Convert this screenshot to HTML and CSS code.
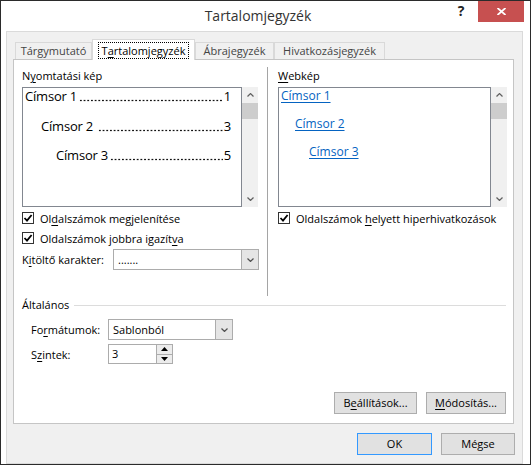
FILE: index.html
```html
<!DOCTYPE html>
<html lang="hu">
<head>
    <meta charset="UTF-8">
    <title>Tartalomjegyzék</title>
    <link rel="stylesheet" href="styles.css">
</head>
<body>
    <div class="dialog">
        <div class="titlebar">
            <div class="title">Tartalomjegyzék</div>
            <div class="help">?</div>
            <div class="close">
                <svg width="9" height="7" viewBox="0 0 9 7"><path d="M0.5 0 L8.5 7 M8.5 0 L0.5 7" stroke="#fff" stroke-width="1.8"/></svg>
            </div>
        </div>

        <div class="client">
            <div class="tabs">
                <div class="tab tab-index">Tárgymutató</div>
                <div class="tab tab-toc active"><span class="focus">T<u>a</u>rtalomjegyzék</span></div>
                <div class="tab tab-fig">Ábrajegyzék</div>
                <div class="tab tab-auth">Hivatkozásjegyzék</div>
            </div>

            <div class="panel">
                <div class="columns">
                    <!-- print preview -->
                    <div class="col col-print">
                        <div class="label">N<u>y</u>omtatási kép</div>
                        <div class="preview">
                            <div class="preview-box">
                                <div class="toc-row"><span>Címsor 1</span><span class="dots"></span><span>1</span></div>
                                <div class="toc-row lvl2"><span>Címsor 2</span><span class="dots gap"></span><span>3</span></div>
                                <div class="toc-row lvl3"><span>Címsor 3</span><span class="dots"></span><span>5</span></div>
                            </div>
                            <div class="scrollbar">
                                <div class="sb-btn"><svg width="7" height="4" viewBox="0 0 7 4"><path d="M0.5 3.5 L3.5 0.6 L6.5 3.5" fill="none" stroke="#606060" stroke-width="1.3"/></svg></div>
                                <div class="sb-thumb"></div>
                                <div class="sb-track"></div>
                                <div class="sb-btn"><svg width="7" height="4" viewBox="0 0 7 4"><path d="M0.5 0.5 L3.5 3.4 L6.5 0.5" fill="none" stroke="#606060" stroke-width="1.3"/></svg></div>
                            </div>
                        </div>
                        <div class="check first">
                            <span class="box"><svg width="10" height="10" viewBox="0 0 10 10"><path d="M1.5 5 L4 7.6 L8.6 2" fill="none" stroke="#000" stroke-width="1.8"/></svg></span>
                            <span>Ol<u>d</u>alszámok megjelenítése</span>
                        </div>
                        <div class="check">
                            <span class="box"><svg width="10" height="10" viewBox="0 0 10 10"><path d="M1.5 5 L4 7.6 L8.6 2" fill="none" stroke="#000" stroke-width="1.8"/></svg></span>
                            <span>Oldalszámok jobbra igazít<u>v</u>a</span>
                        </div>
                        <div class="field-row leader-row">
                            <span class="field-label leader-label">K<u>i</u>töltő karakter:</span>
                            <div class="combo leader-combo">
                                <span class="combo-text">.......</span>
                                <span class="combo-arrow"><svg width="7" height="4" viewBox="0 0 7 4"><path d="M0.5 0.5 L3.5 3.4 L6.5 0.5" fill="none" stroke="#505050" stroke-width="1.3"/></svg></span>
                            </div>
                        </div>
                    </div>

                    <div class="divider"></div>

                    <!-- web preview -->
                    <div class="col col-web">
                        <div class="label"><u>W</u>ebkép</div>
                        <div class="preview">
                            <div class="preview-box web-box">
                                <a class="web-link">Címsor 1</a>
                                <a class="web-link lvl2">Címsor 2</a>
                                <a class="web-link lvl3">Címsor 3</a>
                            </div>
                            <div class="scrollbar">
                                <div class="sb-btn"><svg width="7" height="4" viewBox="0 0 7 4"><path d="M0.5 3.5 L3.5 0.6 L6.5 3.5" fill="none" stroke="#606060" stroke-width="1.3"/></svg></div>
                                <div class="sb-thumb"></div>
                                <div class="sb-track"></div>
                                <div class="sb-btn"><svg width="7" height="4" viewBox="0 0 7 4"><path d="M0.5 0.5 L3.5 3.4 L6.5 0.5" fill="none" stroke="#606060" stroke-width="1.3"/></svg></div>
                            </div>
                        </div>
                        <div class="check first">
                            <span class="box"><svg width="10" height="10" viewBox="0 0 10 10"><path d="M1.5 5 L4 7.6 L8.6 2" fill="none" stroke="#000" stroke-width="1.8"/></svg></span>
                            <span>Oldalszámok <u>h</u>elyett hiperhivatkozások</span>
                        </div>
                    </div>
                </div>

                <div class="general">
                    <div class="group-title">
                        <span>Általános</span>
                        <span class="rule"></span>
                    </div>
                    <div class="field-row format-row">
                        <span class="field-label">Fo<u>r</u>mátumok:</span>
                        <div class="combo format-combo">
                            <span class="combo-text">Sablonból</span>
                            <span class="combo-arrow"><svg width="7" height="4" viewBox="0 0 7 4"><path d="M0.5 0.5 L3.5 3.4 L6.5 0.5" fill="none" stroke="#505050" stroke-width="1.3"/></svg></span>
                        </div>
                    </div>
                    <div class="field-row level-row">
                        <span class="field-label">S<u>z</u>intek:</span>
                        <div class="spinner">
                            <span class="spin-value">3</span>
                            <span class="spin-btns">
                                <span class="spin-btn"><svg width="7" height="4" viewBox="0 0 7 4"><polygon points="0,4 3.5,0 7,4" fill="#000"/></svg></span>
                                <span class="spin-btn"><svg width="7" height="4" viewBox="0 0 7 4"><polygon points="0,0 3.5,4 7,0" fill="#000"/></svg></span>
                            </span>
                        </div>
                    </div>
                </div>

                <div class="panel-buttons">
                    <button class="btn btn-options">B<u>e</u>állítások...</button>
                    <button class="btn btn-modify"><u>M</u>ódosítás...</button>
                </div>
            </div>

            <div class="dialog-buttons">
                <button class="btn btn-ok">OK</button>
                <button class="btn btn-cancel">Mégse</button>
            </div>
        </div>
    </div>
</body>
</html>
```

FILE: styles.css
```css
* {
    margin: 0;
    padding: 0;
    box-sizing: border-box;
}

body {
    font-family: "Open Sans", "Noto Sans", sans-serif;
    font-size: 11px;
    color: #000;
    background: #fff;
}

u {
    text-decoration-thickness: 1px;
    text-underline-offset: 2px;
}

/* window frame */
.dialog {
    width: 531px;
    height: 465px;
    border: 1px solid #2b2b2b;
    background: #fff;
    display: flex;
    flex-direction: column;
}

.titlebar {
    height: 30px;
    flex-shrink: 0;
    display: flex;
    align-items: flex-start;
}

.title {
    flex: 1;
    padding-left: 65px;
    text-align: center;
    font-size: 14px;
    line-height: 30px;
    color: #333;
}

.help {
    width: 22px;
    height: 21px;
    margin-right: 6px;
    font-size: 14px;
    font-weight: 700;
    line-height: 20px;
    text-align: center;
    color: #222;
}

.close {
    width: 46px;
    height: 21px;
    margin-right: 6px;
    background: #c75050;
    display: flex;
    align-items: center;
    justify-content: center;
}

.client {
    flex: 1;
    margin: 0 7px 0 5px;
    border: 1px solid #dadada;
    background: #f0f0f0;
    display: flex;
    flex-direction: column;
}

/* tabs */
.tabs {
    height: 27px;
    flex-shrink: 0;
    display: flex;
    align-items: flex-end;
    padding-left: 8px;
}

.tab {
    height: 17px;
    border: 1px solid #d9d9d9;
    border-bottom: none;
    background: #f0f0f0;
    color: #444;
    text-align: center;
    line-height: 16px;
}

.tab-index { width: 77px; }
.tab-toc { width: 103px; }
.tab-fig { width: 79px; }
.tab-auth { width: 111px; }

.tab.active {
    height: 21px;
    margin-bottom: -1px;
    padding-top: 3px;
    background: #fff;
    color: #000;
    position: relative;
}

.focus {
    display: inline-block;
    padding: 0 3px;
    line-height: 15px;
    outline: 1px dotted #000;
}

.panel {
    height: 365px;
    flex-shrink: 0;
    margin: 0 8px 0 6px;
    border: 1px solid #c5c5c5;
    background: #fff;
    display: flex;
    flex-direction: column;
}

/* preview columns */
.columns {
    height: 236px;
    padding-top: 7px;
    display: flex;
}

.col {
    padding-top: 1px;
}

.col-print {
    width: 237px;
    margin-left: 8px;
}

.col-web {
    width: 229px;
    margin-left: 10px;
}

.divider {
    width: 1px;
    margin-left: 8px;
    background: #a5a5a5;
}

.label {
    line-height: 16px;
    height: 16px;
}

.preview {
    height: 120px;
    margin-top: 3px;
    display: flex;
}

.preview-box {
    width: 220px;
    border: 1px solid #828790;
    padding: 0 10px 0 2px;
    display: flex;
    flex-direction: column;
    gap: 13.5px;
}

.toc-row {
    display: flex;
    font-size: 13px;
    line-height: 16px;
    letter-spacing: -0.2px;
    white-space: nowrap;
}

.toc-row.lvl2 { padding-left: 16px; }
.toc-row.lvl3 { padding-left: 31px; }

/* dot leader between heading and page number */
.dots {
    flex: 1;
    margin: 0 1px 0 2px;
    background-image: radial-gradient(circle, #111 0.75px, transparent 1.15px);
    background-size: 3.7px 3px;
    background-position: 0 11px;
    background-repeat: repeat-x;
}

.dots.gap {
    margin-left: 5px;
}

.web-box {
    width: 213px;
    gap: 12px;
}

.web-link {
    align-self: flex-start;
    font-size: 12px;
    line-height: 16px;
    color: #0563c1;
    text-decoration: underline;
    text-underline-offset: 2px;
}

.web-link.lvl2 { margin-left: 14px; }
.web-link.lvl3 { margin-left: 28px; }

.scrollbar {
    width: 16px;
    background: #f0f0f0;
    display: flex;
    flex-direction: column;
}

.sb-btn {
    height: 16px;
    display: flex;
    align-items: center;
    justify-content: center;
}

.sb-thumb {
    height: 16px;
    background: #cdcdcd;
}

.sb-track {
    flex: 1;
}

/* checkboxes */
.check {
    height: 20px;
    display: flex;
    align-items: center;
}

.check.first {
    margin-top: 1px;
}

.box {
    width: 12px;
    height: 12px;
    margin-right: 6px;
    border: 1px solid #333;
    background: #fff;
    display: flex;
    align-items: center;
    justify-content: center;
}

/* combos and spinner */
.field-row {
    display: flex;
    align-items: center;
}

.leader-row {
    margin-top: 1px;
}

.field-label {
    width: 77px;
}

.leader-label {
    width: 91px;
}

.combo {
    height: 21px;
    border: 1px solid #acacac;
    background: #fff;
    display: flex;
}

.leader-combo { width: 146px; }
.format-combo { width: 125px; }

.combo-text {
    flex: 1;
    padding-left: 4px;
    line-height: 19px;
}

.combo-arrow {
    width: 17px;
    border-left: 1px solid #acacac;
    background: #e5e5e5;
    display: flex;
    align-items: center;
    justify-content: center;
}

.spinner {
    width: 65px;
    height: 20px;
    border: 1px solid #acacac;
    background: #fff;
    display: flex;
}

.spin-value {
    flex: 1;
    padding-left: 3px;
    line-height: 18px;
}

.spin-btns {
    width: 16px;
    display: flex;
    flex-direction: column;
    border-left: 1px solid #acacac;
}

.spin-btn {
    flex: 1;
    background: #ececec;
    display: flex;
    align-items: center;
    justify-content: center;
}

.spin-btn + .spin-btn {
    border-top: 1px solid #acacac;
}

/* general group */
.general {
    padding: 1px 7px 0 8px;
}

.group-title {
    height: 16px;
    line-height: 16px;
    display: flex;
    align-items: center;
}

.rule {
    flex: 1;
    height: 1px;
    margin-left: 5px;
    background: #dcdcdc;
}

.format-row {
    margin-top: 6px;
    padding-left: 9px;
}

.level-row {
    margin-top: 4px;
    padding-left: 9px;
}

/* buttons */
.btn {
    height: 22px;
    border: 1px solid #adadad;
    background: #e1e1e1;
    font-family: inherit;
    font-size: 11px;
    color: #000;
    line-height: 20px;
}

.panel-buttons {
    margin-top: auto;
    padding: 0 7px 9px 0;
    display: flex;
    justify-content: flex-end;
    gap: 9px;
}

.btn-options { width: 83px; }
.btn-modify { width: 80px; }

.dialog-buttons {
    margin-top: 9px;
    padding-right: 7px;
    display: flex;
    justify-content: flex-end;
    gap: 9px;
}

.btn-ok {
    width: 75px;
    border-color: #3399ff;
}

.btn-cancel { width: 74px; }
```
